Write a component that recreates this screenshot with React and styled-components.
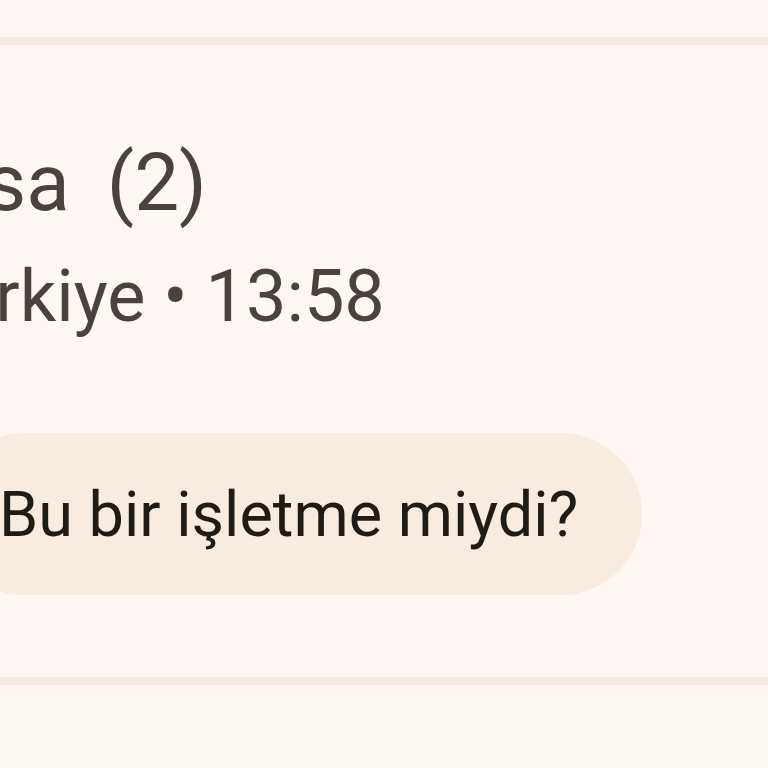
import React from "react";
import styled, { createGlobalStyle } from "styled-components";

const Global = createGlobalStyle`
  html, body {
    margin: 0;
    padding: 0;
    background: #fff7f3;
  }
  body {
    font-family: Roboto, "Noto Sans", "Liberation Sans", sans-serif;
    overflow: hidden;
  }
`;

const Page = styled.div`
  width: 768px;
  height: 768px;
  display: flex;
  flex-direction: column;
  background: #fff7f3;
  overflow: hidden;
`;

const TopGap = styled.div`
  height: 37px;
  flex: none;
`;

const Divider = styled.div`
  height: 8px;
  flex: none;
  background: #f6eae0;
`;

const Card = styled.section`
  flex: none;
  height: 632px;
  box-sizing: border-box;
  padding-top: 92px;
  overflow: hidden;
  display: flex;
  flex-direction: column;
  align-items: flex-start;
`;

const Content = styled.div`
  margin-left: ${(p) => p.$offset}px;
  display: flex;
  flex-direction: column;
  align-items: flex-start;
`;

const Title = styled.div`
  margin-left: ${(p) => p.$shift || 0}px;
  font-size: 80px;
  line-height: 92px;
  color: #49433b;
  white-space: nowrap;
  display: flex;
`;

const Count = styled.span`
  margin-left: 37px;
`;

const Meta = styled.div`
  margin-top: 25px;
  font-size: 72px;
  line-height: 86px;
  color: #49433b;
  white-space: nowrap;
`;

const Pill = styled.button`
  margin-top: 93px;
  margin-left: ${(p) => p.$offset}px;
  height: 162px;
  border: none;
  border-radius: 81px;
  background: #f8ebe0;
  color: #1f1b16;
  font-family: inherit;
  font-size: 63px;
  padding: 0 64px 0 56px;
  white-space: nowrap;
  display: flex;
  align-items: center;
`;

const Footer = styled.div`
  flex: 1;
  display: flex;
  flex-direction: column;
  background: #fdf9f3;
`;

const FooterEdge = styled.div`
  height: 10px;
  background: #fff6f4;
`;

export default function App() {
  return (
    <Page>
      <Global />
      <TopGap />
      <Divider />
      <Card>
        <Content $offset={-84}>
          <Title $shift={-45}>
            <span>Musa</span>
            <Count>(2)</Count>
          </Title>
          <Meta>Türkiye • 13:58</Meta>
        </Content>
        <Pill $offset={-57}>Bu bir işletme miydi?</Pill>
      </Card>
      <Divider />
      <Footer>
        <FooterEdge />
      </Footer>
    </Page>
  );
}
